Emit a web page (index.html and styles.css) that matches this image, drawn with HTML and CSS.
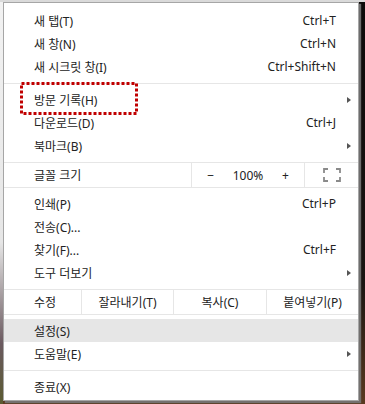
FILE: index.html
```html
<!DOCTYPE html>
<html lang="ko">
<head>
<meta charset="utf-8">
<link rel="stylesheet" href="styles.css">
</head>
<body>
<div class="menu">
  <div class="item"><span class="label">새 탭(T)</span><span class="key">Ctrl+T</span></div>
  <div class="item"><span class="label">새 창(N)</span><span class="key">Ctrl+N</span></div>
  <div class="item"><span class="label">새 시크릿 창(I)</span><span class="key">Ctrl+Shift+N</span></div>
  <div class="sep"></div>
  <div class="item"><span class="label">방문 기록(H)</span><span class="arrow"></span></div>
  <div class="item"><span class="label">다운로드(D)</span><span class="key">Ctrl+J</span></div>
  <div class="item"><span class="label">북마크(B)</span><span class="arrow"></span></div>
  <div class="zoom">
    <span class="zlabel">글꼴 크기</span>
    <div class="zctl">
      <span class="zbtn">−</span>
      <span class="zbtn">100%</span>
      <span class="zbtn">+</span>
    </div>
    <div class="zfull">
      <svg width="18" height="14" viewBox="0 0 18 14"><path d="M1 5V1H5M13 1H17V5M17 9V13H13M5 13H1V9" fill="none" stroke="#8a8a8a" stroke-width="1.8"/></svg>
    </div>
  </div>
  <div class="item"><span class="label">인쇄(P)</span><span class="key">Ctrl+P</span></div>
  <div class="item"><span class="label">전송(C)...</span></div>
  <div class="item"><span class="label">찾기(F)...</span><span class="key">Ctrl+F</span></div>
  <div class="item"><span class="label">도구 더보기</span><span class="arrow"></span></div>
  <div class="edit">
    <span class="elabel">수정</span>
    <span class="ebtn b1">잘라내기(T)</span>
    <span class="ebtn b2">복사(C)</span>
    <span class="ebtn b3">붙여넣기(P)</span>
  </div>
  <div class="item hover"><span class="label">설정(S)</span></div>
  <div class="item"><span class="label">도움말(E)</span><span class="arrow"></span></div>
  <div class="sep"></div>
  <div class="item"><span class="label">종료(X)</span></div>
  <svg class="mark" width="118" height="33" viewBox="0 0 118 33"><rect x="1.5" y="1.5" width="115" height="30" fill="none" stroke="#c00000" stroke-width="3" stroke-dasharray="3 2"/></svg>
</div>
</body>
</html>
```
FILE: styles.css
```css
html, body {
  margin: 0;
  padding: 0;
}
body {
  width: 365px;
  height: 404px;
  overflow: hidden;
  background:
    linear-gradient(#dadada, #dadada) top left / 100% 2px no-repeat,
    linear-gradient(to bottom, #f2f2f2 0, #e6e6e6 60%, #6b5a60 85%, #5a5a30 100%) left top / 3px 100% no-repeat,
    linear-gradient(to bottom, #0d0b0a 0, #1a1512 70%, #5a3a20 100%);
  font-family: "Noto Sans", "Noto Sans CJK KR", sans-serif;
  font-size: 12px;
  color: #222;
}
.menu {
  position: relative;
  box-sizing: border-box;
  margin: 2px 0 0 3px;
  width: 356px;
  height: 399px;
  background: #fff;
  border: 1px solid #a6a6a6;
  box-shadow: 2px 2px 1px rgba(120, 120, 120, 0.9);
  padding-top: 6px;
}
.item {
  display: flex;
  align-items: center;
  height: 23px;
  padding: 0 7px 0 30px;
}
.item.hover {
  background: #e6e6e6;
}
.label {
  flex: 1;
  white-space: nowrap;
}
.key {
  margin-right: 15px;
  white-space: nowrap;
}
.arrow {
  width: 0;
  height: 0;
  border-top: 3.5px solid transparent;
  border-bottom: 3.5px solid transparent;
  border-left: 4px solid #555;
}
.sep {
  height: 1px;
  background: #e6e6e6;
  margin: 5px 0 4px;
}
.zoom, .edit {
  display: flex;
  align-items: stretch;
  height: 24px;
  border-top: 1px solid #e6e6e6;
  border-bottom: 1px solid #e6e6e6;
  margin: 5px 0 4px;
}
.zlabel {
  flex: 1;
  display: flex;
  align-items: center;
  padding-left: 30px;
}
.zctl {
  display: flex;
  width: 112px;
  border-left: 1px solid #e6e6e6;
  border-right: 1px solid #e6e6e6;
}
.zbtn {
  flex: 1;
  display: flex;
  align-items: center;
  justify-content: center;
}
.zfull {
  width: 53px;
  display: flex;
  align-items: center;
  justify-content: center;
}
.elabel {
  width: 47px;
  padding-left: 30px;
  display: flex;
  align-items: center;
}
.ebtn {
  display: flex;
  align-items: center;
  justify-content: center;
  border-left: 1px solid #e6e6e6;
  white-space: nowrap;
}
.b1 { width: 91px; }
.b2 { width: 92px; }
.b3 { flex: 1; }
.mark {
  position: absolute;
  left: 16px;
  top: 79px;
}
```
